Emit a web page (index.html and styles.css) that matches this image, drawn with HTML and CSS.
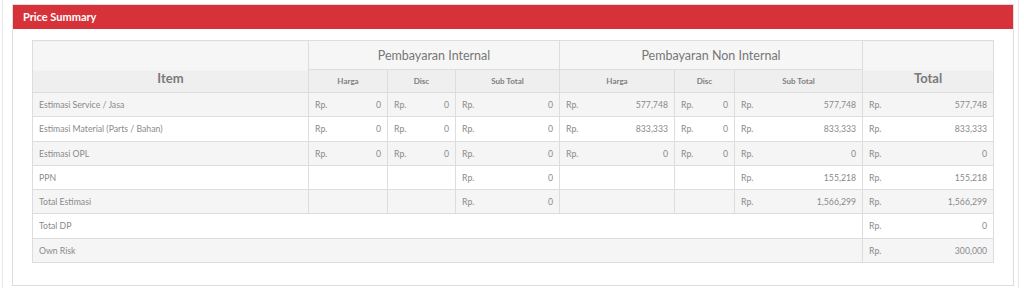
FILE: index.html
```html
<!DOCTYPE html>
<html>
<head>
<meta charset="utf-8">
<link rel="stylesheet" href="styles.css">
</head>
<body>
<div class="wrap">
  <div class="panel">
    <div class="panel-head">Price Summary</div>
    <div class="panel-body">
      <table class="summary">
        <colgroup>
          <col class="c-item"><col class="c-h1"><col class="c-d1"><col class="c-s1">
          <col class="c-h2"><col class="c-d2"><col class="c-s2"><col class="c-tot">
        </colgroup>
        <thead>
          <tr class="h-top">
            <th rowspan="2" class="big span2">Item</th>
            <th colspan="3" class="group">Pembayaran Internal</th>
            <th colspan="3" class="group">Pembayaran Non Internal</th>
            <th rowspan="2" class="big span2">Total</th>
          </tr>
          <tr class="h-sub">
            <th>Harga</th><th>Disc</th><th>Sub Total</th>
            <th>Harga</th><th>Disc</th><th>Sub Total</th>
          </tr>
        </thead>
        <tbody>
          <tr>
            <td>Estimasi Service / Jasa</td>
            <td><div class="m"><span>Rp.</span><span>0</span></div></td>
            <td><div class="m"><span>Rp.</span><span>0</span></div></td>
            <td><div class="m"><span>Rp.</span><span>0</span></div></td>
            <td><div class="m"><span>Rp.</span><span>577,748</span></div></td>
            <td><div class="m"><span>Rp.</span><span>0</span></div></td>
            <td><div class="m"><span>Rp.</span><span>577,748</span></div></td>
            <td><div class="m"><span>Rp.</span><span>577,748</span></div></td>
          </tr>
          <tr>
            <td>Estimasi Material (Parts / Bahan)</td>
            <td><div class="m"><span>Rp.</span><span>0</span></div></td>
            <td><div class="m"><span>Rp.</span><span>0</span></div></td>
            <td><div class="m"><span>Rp.</span><span>0</span></div></td>
            <td><div class="m"><span>Rp.</span><span>833,333</span></div></td>
            <td><div class="m"><span>Rp.</span><span>0</span></div></td>
            <td><div class="m"><span>Rp.</span><span>833,333</span></div></td>
            <td><div class="m"><span>Rp.</span><span>833,333</span></div></td>
          </tr>
          <tr>
            <td>Estimasi OPL</td>
            <td><div class="m"><span>Rp.</span><span>0</span></div></td>
            <td><div class="m"><span>Rp.</span><span>0</span></div></td>
            <td><div class="m"><span>Rp.</span><span>0</span></div></td>
            <td><div class="m"><span>Rp.</span><span>0</span></div></td>
            <td><div class="m"><span>Rp.</span><span>0</span></div></td>
            <td><div class="m"><span>Rp.</span><span>0</span></div></td>
            <td><div class="m"><span>Rp.</span><span>0</span></div></td>
          </tr>
          <tr>
            <td>PPN</td>
            <td></td><td></td>
            <td><div class="m"><span>Rp.</span><span>0</span></div></td>
            <td></td><td></td>
            <td><div class="m"><span>Rp.</span><span>155,218</span></div></td>
            <td><div class="m"><span>Rp.</span><span>155,218</span></div></td>
          </tr>
          <tr>
            <td>Total Estimasi</td>
            <td></td><td></td>
            <td><div class="m"><span>Rp.</span><span>0</span></div></td>
            <td></td><td></td>
            <td><div class="m"><span>Rp.</span><span>1,566,299</span></div></td>
            <td><div class="m"><span>Rp.</span><span>1,566,299</span></div></td>
          </tr>
          <tr>
            <td colspan="7">Total DP</td>
            <td><div class="m"><span>Rp.</span><span>0</span></div></td>
          </tr>
          <tr>
            <td colspan="7">Own Risk</td>
            <td><div class="m"><span>Rp.</span><span>300,000</span></div></td>
          </tr>
        </tbody>
      </table>
    </div>
  </div>
</div>
</body>
</html>
```
FILE: styles.css
```css
html, body {
  margin: 0;
  padding: 0;
  background: #ffffff;
  font-family: Lato, "Open Sans", sans-serif;
}

.wrap {
  margin-left: 2px;
  width: 1017px;
  box-sizing: border-box;
  height: 288px;
  border-left: 1px solid #e6e6e6;
  border-right: 1px solid #e6e6e6;
  padding: 4px 4px 0 9px;
}

.panel {
  border: 1px solid #dddddd;
  background: #ffffff;
}

.panel-head {
  background: #d73239;
  color: #ffffff;
  font-weight: 700;
  font-size: 11px;
  height: 24px;
  line-height: 24px;
  padding-left: 10px;
}

.panel-body {
  padding: 11px 19px 22px 19px;
}

.summary {
  width: 961px;
  table-layout: fixed;
  border-collapse: collapse;
  border: 1px solid #dddddd;
  font-size: 8.7px;
  color: #8a8a8a;
}

.c-item { width: 276px; }
.c-h1 { width: 79px; }
.c-d1 { width: 68px; }
.c-s1 { width: 104px; }
.c-h2 { width: 115px; }
.c-d2 { width: 60px; }
.c-s2 { width: 128px; }
.c-tot { width: 131px; }

.summary th,
.summary td {
  border: 1px solid #dddddd;
  padding: 0 6px;
}

.summary th {
  color: #777777;
  text-align: center;
  vertical-align: bottom;
}

.h-top th {
  height: 28px;
  background: #f6f6f6;
}

.h-sub th {
  height: 22px;
  background: #efefef;
  font-size: 8px;
  font-weight: 700;
  color: #808080;
  vertical-align: middle;
}

.summary th.group {
  font-size: 12.5px;
  font-weight: 400;
  vertical-align: middle;
}

.summary th.big {
  font-size: 13px;
  font-weight: 700;
  color: #7a7a7a;
  padding-bottom: 6px;
  background: linear-gradient(#f6f6f6 0, #f6f6f6 29px, #efefef 29px, #efefef 100%);
}

.summary tbody td {
  height: 23.25px;
  vertical-align: middle;
}

.summary tbody tr:nth-child(odd) td {
  background: #f5f5f5;
}

.summary tbody tr:nth-child(even) td {
  background: #ffffff;
}

.m {
  display: flex;
  justify-content: space-between;
}
```
